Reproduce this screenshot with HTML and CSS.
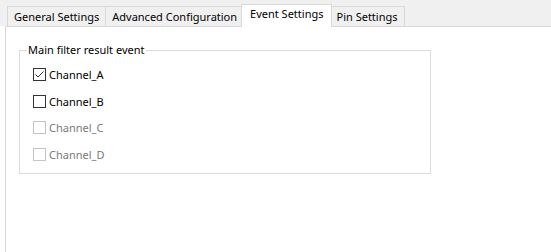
FILE: index.html
```html
<!DOCTYPE html>
<html lang="en">
<head>
  <meta charset="UTF-8">
  <meta name="viewport" content="width=device-width, initial-scale=1.0">
  <title>Event Settings</title>
  <link rel="stylesheet" href="styles.css">
</head>
<body>
  <!-- Tab strip -->
  <div class="tabstrip">
    <div class="tab">General Settings</div>
    <div class="tab">Advanced Configuration</div>
    <div class="tab tab-active">Event Settings</div>
    <div class="tab">Pin Settings</div>
  </div>

  <!-- Event Settings page -->
  <div class="page">
    <div class="group">
      <span class="group-title">Main filter result event</span>
      <label class="check">
        <span class="box">
          <svg width="11" height="11" viewBox="0 0 11 11"><polyline points="1.5,5.5 4,8 9.5,2.5" fill="none" stroke="#333" stroke-width="1"/></svg>
        </span>
        Channel_A
      </label>
      <label class="check">
        <span class="box"></span>
        Channel_B
      </label>
      <label class="check check-disabled">
        <span class="box"></span>
        Channel_C
      </label>
      <label class="check check-disabled">
        <span class="box"></span>
        Channel_D
      </label>
    </div>
  </div>
</body>
</html>
```

FILE: styles.css
```css
html, body {
  height: 100%;
}
body {
  margin: 0;
  font-family: "Noto Sans", "Open Sans", sans-serif;
  font-size: 11px;
  color: #000;
  background-color: #fff;
  display: flex;
  flex-direction: column;
}
.tabstrip {
  display: flex;
  align-items: flex-end;
  height: 26px;
  padding-left: 7px;
  background-color: #f0f0f0;
}
.tab {
  height: 20px;
  box-sizing: border-box;
  padding: 0 6px;
  margin-left: -1px;
  line-height: 19px;
  border: 1px solid #d9d9d9;
  border-bottom: none;
  background-color: #f0f0f0;
  white-space: nowrap;
}
.tab:first-child {
  margin-left: 0;
}
.tab-active {
  height: 23px;
  margin: 0 -2px -1px -3px;
  padding: 0 8px;
  line-height: 18px;
  background-color: #fff;
  position: relative;
  z-index: 1;
}
.page {
  flex: 1;
  margin-left: 5px;
  border-top: 1px solid #d9d9d9;
  border-left: 1px solid #d9d9d9;
  background-color: #fff;
  padding: 23px 0 0 13px;
}
.group {
  position: relative;
  width: 412px;
  box-sizing: border-box;
  padding: 10px 0 5px 13px;
  border: 1px solid #dcdcdc;
}
.group-title {
  position: absolute;
  top: -9px;
  left: 7px;
  padding: 0 1px;
  line-height: 16px;
  background-color: #fff;
}
.check {
  display: flex;
  align-items: center;
  gap: 3px;
  height: 26.7px;
}
.box {
  width: 13px;
  height: 13px;
  box-sizing: border-box;
  border: 1px solid #333;
  display: flex;
}
.check-disabled {
  color: #7a7a7a;
}
.check-disabled .box {
  border-color: #c4c4c4;
}
```
